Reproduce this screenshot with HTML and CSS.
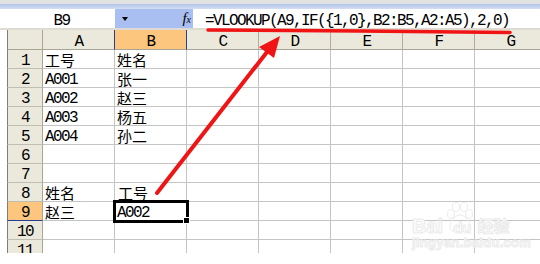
FILE: index.html
```html
<!DOCTYPE html>
<html>
<head>
<meta charset="utf-8">
<link rel="stylesheet" href="styles.css">
</head>
<body>
<div class="app">
  <div class="topband"></div>
  <div class="blueband"></div>
  <div class="fbar">
    <div class="lead"></div>
    <div class="namebox">B9</div>
    <div class="ddarea"><span class="tri"></span><span class="fx">f<small>x</small></span></div>
    <div class="formula">=VLOOKUP(A9,IF({1,0},B2:B5,A2:A5),2,0)</div>
  </div>
  <div class="sep"></div>
  <div class="sheet">
    <div class="c h rh corner"></div>
    <div class="c h">A</div>
    <div class="c h hsel">B</div>
    <div class="c h">C</div>
    <div class="c h">D</div>
    <div class="c h">E</div>
    <div class="c h">F</div>
    <div class="c h">G</div>

    <div class="c rh">1</div>
    <div class="c"><span class="cjk">工号</span></div>
    <div class="c"><span class="cjk">姓名</span></div>
    <div class="c"></div><div class="c"></div><div class="c"></div><div class="c"></div><div class="c"></div>

    <div class="c rh">2</div>
    <div class="c">A001</div>
    <div class="c"><span class="cjk">张一</span></div>
    <div class="c"></div><div class="c"></div><div class="c"></div><div class="c"></div><div class="c"></div>

    <div class="c rh">3</div>
    <div class="c">A002</div>
    <div class="c"><span class="cjk">赵三</span></div>
    <div class="c"></div><div class="c"></div><div class="c"></div><div class="c"></div><div class="c"></div>

    <div class="c rh">4</div>
    <div class="c">A003</div>
    <div class="c"><span class="cjk">杨五</span></div>
    <div class="c"></div><div class="c"></div><div class="c"></div><div class="c"></div><div class="c"></div>

    <div class="c rh">5</div>
    <div class="c">A004</div>
    <div class="c"><span class="cjk">孙二</span></div>
    <div class="c"></div><div class="c"></div><div class="c"></div><div class="c"></div><div class="c"></div>

    <div class="c rh">6</div>
    <div class="c"></div><div class="c"></div><div class="c"></div><div class="c"></div><div class="c"></div><div class="c"></div><div class="c"></div>

    <div class="c rh">7</div>
    <div class="c"></div><div class="c"></div><div class="c"></div><div class="c"></div><div class="c"></div><div class="c"></div><div class="c"></div>

    <div class="c rh">8</div>
    <div class="c"><span class="cjk">姓名</span></div>
    <div class="c bpad"><span class="cjk">工号</span></div>
    <div class="c"></div><div class="c"></div><div class="c"></div><div class="c"></div><div class="c"></div>

    <div class="c rh rsel">9</div>
    <div class="c"><span class="cjk">赵三</span></div>
    <div class="c selected">A002<span class="handle"></span></div>
    <div class="c"></div><div class="c"></div><div class="c"></div><div class="c"></div><div class="c"></div>

    <div class="c rh">10</div>
    <div class="c"></div><div class="c"></div><div class="c"></div><div class="c"></div><div class="c"></div><div class="c"></div><div class="c"></div>

    <div class="c rh">11</div>
    <div class="c"></div><div class="c"></div><div class="c"></div><div class="c"></div><div class="c"></div><div class="c"></div><div class="c"></div>
  </div>

  <div class="wm">
    <div class="wm1"><span>Bai</span><svg class="paw" width="30" height="32" viewBox="0 0 30 32"><g fill="none" stroke="#ececec" stroke-width="1"><ellipse cx="6" cy="12" rx="3.5" ry="4.5"/><ellipse cx="11" cy="5" rx="3.5" ry="4.5"/><ellipse cx="19" cy="5" rx="3.5" ry="4.5"/><ellipse cx="24" cy="12" rx="3.5" ry="4.5"/><path d="M15 13 C9 13 5 21 5 25 C5 30 10 30 15 29 C20 30 25 30 25 25 C25 21 21 13 15 13 Z"/></g></svg><span class="du">du</span><span class="jy">经验</span></div>
    <div class="wm2">jingyan.baidu.com</div>
  </div>

  <svg class="annot" width="540" height="264" viewBox="0 0 540 264">
    <path d="M208 30 L360 31 L510 32.5" fill="none" stroke="#f01414" stroke-width="3.5" stroke-linecap="round"/>
    <line x1="157" y1="193" x2="267" y2="52" stroke="#f01414" stroke-width="4" stroke-linecap="round"/>
    <polygon points="280,36 274,58 259,47" fill="#f01414"/>
  </svg>
</div>
</body>
</html>
```
FILE: styles.css
```css
html, body {
  margin: 0;
  padding: 0;
  background: #fff;
}
body {
  width: 540px;
  height: 264px;
  overflow: hidden;
  font-family: "Liberation Mono", "Noto Sans CJK SC", monospace;
  font-size: 16px;
  color: #000;
}
.app {
  position: relative;
  width: 540px;
  height: 264px;
  overflow: hidden;
}
.topband {
  height: 4px;
  background: #e2e2e2;
}
.blueband {
  height: 5px;
  background: linear-gradient(#b2c4ea, #d4def3);
}
.fbar {
  display: flex;
  height: 19px;
  align-items: stretch;
}
.lead {
  width: 8px;
  background: #fff;
}
.namebox {
  width: 107px;
  display: flex;
  align-items: flex-end;
  justify-content: center;
  line-height: 14px;
  letter-spacing: -1.6px;
}
.ddarea {
  width: 78px;
  background: #a9bef1;
  display: flex;
  align-items: center;
}
.tri {
  width: 0;
  height: 0;
  margin-left: 7px;
  border-top: 4px solid #000;
  border-left: 3px solid transparent;
  border-right: 3px solid transparent;
}
.fx {
  margin-left: auto;
  margin-right: 2px;
  font-family: "Liberation Serif", serif;
  font-style: italic;
  font-size: 15px;
  line-height: 15px;
}
.fx small {
  font-size: 10px;
}
.formula {
  flex: 1;
  padding-left: 12px;
  display: flex;
  align-items: flex-end;
  line-height: 14px;
  letter-spacing: -1.6px;
  white-space: nowrap;
}
.sep {
  height: 2px;
  background: #dedcd2;
}
.sheet {
  margin-left: 7px;
  display: grid;
  grid-template-columns: 36px repeat(7, 72px);
  grid-template-rows: 20px repeat(11, 19px);
  height: 223px;
  overflow: hidden;
}
.c {
  box-sizing: border-box;
  border-right: 1px solid #c4c4c4;
  border-bottom: 1px solid #c4c4c4;
  display: flex;
  align-items: flex-end;
  padding-left: 2px;
  line-height: 14px;
  letter-spacing: -1.6px;
  white-space: nowrap;
  position: relative;
}
.h {
  background: #ebe9dc;
  border-right-color: #b0ad9e;
  border-bottom-color: #a8a596;
  justify-content: center;
  padding-left: 0;
}
.rh {
  background: #ebe9dc;
  border-left: 1px solid #7d7d7d;
  border-right-color: #a8a596;
  border-bottom-color: #c0beb2;
  justify-content: center;
  padding-left: 0;
}
.corner {
  border-bottom-color: #a8a596;
}
.hsel {
  background: #fcc67e;
  border-left: 1px solid #2a3f8f;
  border-right: 1px solid #2a3f8f;
  margin-left: -1px;
}
.rsel {
  background: #fcc67e;
  border-bottom: 1px solid #2a3f8f;
}
.cjk {
  font-family: "Noto Sans CJK SC", sans-serif;
  letter-spacing: 0;
  line-height: 17px;
  font-size: 15px;
}
.bpad {
  padding-left: 3px;
}
.selected {
  outline: 3px solid #000;
  outline-offset: -1px;
  z-index: 2;
}
.handle {
  position: absolute;
  right: -4px;
  bottom: -4px;
  width: 5px;
  height: 5px;
  background: #000;
  border: 1px solid #fff;
}
.wm {
  position: absolute;
  left: 412px;
  top: 203px;
  color: #fdfdfd;
  -webkit-text-stroke: 1px #ebebeb;
  font-family: "Liberation Sans", sans-serif;
  font-weight: bold;
}
.wm1 {
  display: flex;
  align-items: flex-end;
  height: 33px;
  font-size: 20px;
  line-height: 20px;
}
.paw {
  margin-left: 2px;
  margin-right: -22px;
  margin-bottom: 2px;
}
.du {
  font-size: 15px;
  line-height: 15px;
  margin-right: 6px;
  margin-bottom: 1px;
}
.jy {
  font-family: "Noto Sans CJK SC", sans-serif;
  font-size: 16px;
  line-height: 16px;
  margin-bottom: 3px;
}
.wm2 {
  font-size: 13px;
  line-height: 14px;
  letter-spacing: 0.3px;
}
.annot {
  position: absolute;
  left: 0;
  top: 0;
  pointer-events: none;
  z-index: 5;
}
```
